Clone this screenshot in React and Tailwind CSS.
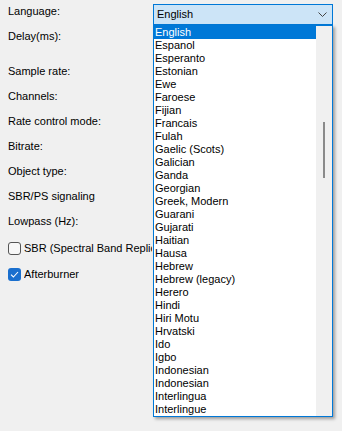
import React from 'react';

const languages = [
  'English', 'Espanol', 'Esperanto', 'Estonian', 'Ewe', 'Faroese', 'Fijian', 'Francais',
  'Fulah', 'Gaelic (Scots)', 'Galician', 'Ganda', 'Georgian', 'Greek, Modern', 'Guarani',
  'Gujarati', 'Haitian', 'Hausa', 'Hebrew', 'Hebrew (legacy)', 'Herero', 'Hindi', 'Hiri Motu',
  'Hrvatski', 'Ido', 'Igbo', 'Indonesian', 'Indonesian', 'Interlingua', 'Interlingue',
];

const Row = ({ children, className = '' }) => (
  <div className={`flex items-center h-[25px] ${className}`}>{children}</div>
);

const Checkbox = ({ checked, label }) => (
  <div className="flex items-center h-[26px]">
    {checked ? (
      <span className="w-[13px] h-[13px] rounded-[3px] bg-[#1a6fce] flex items-center justify-center">
        <svg width="9" height="7" viewBox="0 0 9 7" fill="none">
          <path d="M1 3.6 L3.4 6 L8 1" stroke="#fff" strokeWidth="1.1" />
        </svg>
      </span>
    ) : (
      <span className="w-[13px] h-[13px] rounded-[3px] border border-[#555] bg-[#f7f7f7]" />
    )}
    {/* label is hidden under the open dropdown past this width */}
    <span className="ml-[3px] max-w-[128px] overflow-hidden whitespace-nowrap">{label}</span>
  </div>
);

export default function App() {
  return (
    <div
      className="relative w-[342px] h-[431px] overflow-hidden bg-[#f0f0f0] text-[11px] leading-[13px] text-black"
      style={{ fontFamily: '"Liberation Sans", Arial, sans-serif' }}
    >
      <div className="pt-[4px] pl-[8px] pr-[9px]">
        {/* Language row with open combo box */}
        <div className="flex items-start h-[21px]">
          <span className="pt-[1px]">Language:</span>
          <div className="relative ml-auto w-[180px] z-10">
            <div className="h-[21px] border border-[#0078d7] bg-[#cce4f7] flex items-center pl-[3px] pr-[5px]">
              <span>English</span>
              <svg className="ml-auto" width="9" height="5" viewBox="0 0 9 5" fill="none">
                <path d="M0.5 0.5 L4.5 4.5 L8.5 0.5" stroke="#444" strokeWidth="1" />
              </svg>
            </div>
            <div className="absolute left-0 top-full w-[180px] h-[392px] border border-[#0078d7] bg-white flex shadow-[2px_2px_3px_rgba(0,0,0,0.35)]">
              <ul className="flex-1">
                {languages.map((lang, i) => (
                  <li
                    key={i}
                    className={`h-[13px] pl-[1px] whitespace-nowrap ${i === 0 ? 'bg-[#0078d7] text-white' : ''}`}
                  >
                    {lang}
                  </li>
                ))}
              </ul>
              <div className="w-[16px] bg-[#f0f0f0] pt-[96px] pl-[7px]">
                <div className="w-[2px] h-[56px] bg-[#8a8a8a]" />
              </div>
            </div>
          </div>
        </div>

        <div className="flex items-center h-[22px]">Delay(ms):</div>

        <div className="mt-[12px]">
          <Row>Sample rate:</Row>
          <Row>Channels:</Row>
          <Row>Rate control mode:</Row>
          <Row>Bitrate:</Row>
          <Row>Object type:</Row>
          <Row>SBR/PS signaling</Row>
          <Row>Lowpass (Hz):</Row>
        </div>

        <div className="mt-[1px]">
          <Checkbox checked={false} label="SBR (Spectral Band Replication)" />
          <Checkbox checked label="Afterburner" />
        </div>
      </div>
    </div>
  );
}
